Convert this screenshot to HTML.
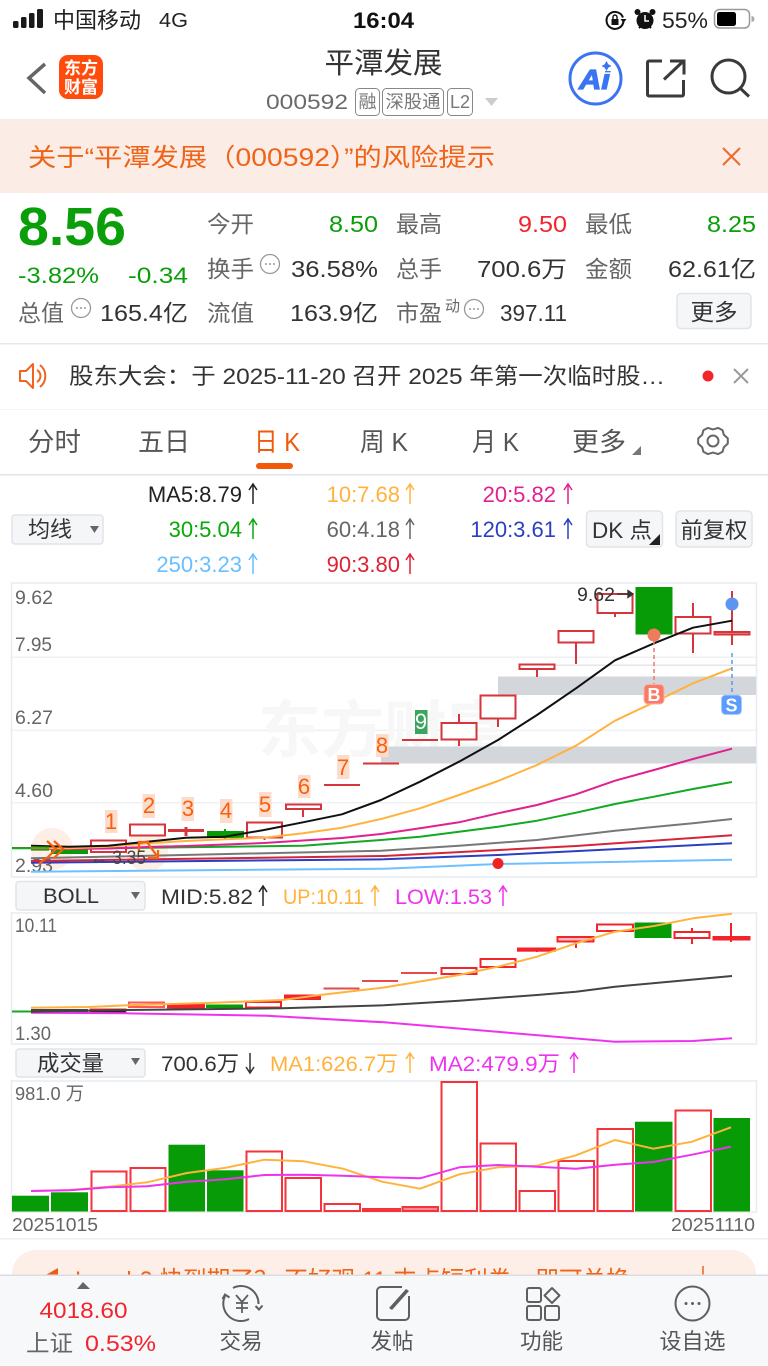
<!DOCTYPE html>
<html lang="zh"><head><meta charset="utf-8"><title>平潭发展</title>
<style>
html,body{margin:0;padding:0;background:#fff;width:768px;height:1366px;overflow:hidden}
svg{display:block;position:absolute;left:0;top:0}
text{font-family:"Liberation Sans","Noto Sans CJK SC",sans-serif}
.lab{font-size:23px;fill:#666}
.val{font-size:23px;fill:#333;text-anchor:end}
.g{fill:#0a9f0a}.r{fill:#f2242c}
.ax{font-size:19px;fill:#666}
.tab{font-size:26px;fill:#555}
.ma{font-size:22px;text-anchor:end}
.btn{fill:#f5f6f8;stroke:#e1e4e9;stroke-width:1.5}
.c1 rect,.c1 path{stroke:#d6353b;stroke-width:2;fill:#fff}
.c2 rect,.c2 path{stroke:#f3232b;stroke-width:2;fill:#fff}
.v rect{stroke:#f5333b;stroke-width:2;fill:#fff}
.c1 rect.gr,.c2 rect.gr,.v rect.gr{fill:#079b07;stroke:none}
.num{font-size:22px;fill:#f8600f;text-anchor:middle}
.nb{fill:#fcdccb}
.ln{fill:none;stroke-width:2;stroke-linejoin:round;stroke-linecap:butt}
.ic{fill:none;stroke:#5f5f5f;stroke-width:2}
.nav{font-size:22px;fill:#555;text-anchor:middle}
</style></head><body>
<svg width="768" height="1366" viewBox="0 0 768 1366" xmlns="http://www.w3.org/2000/svg">
<rect width="768" height="1366" fill="#fff"/>
<!-- status bar -->
<g fill="#1a1a1a"><rect x="13" y="21" width="5.5" height="7" rx="1.5"/><rect x="21" y="17" width="5.5" height="11" rx="1.5"/><rect x="29" y="13" width="5.5" height="15" rx="1.5"/><rect x="37" y="9" width="6" height="19" rx="1.5"/></g>
<text x="53" y="28" font-size="22" fill="#222" textLength="88" lengthAdjust="spacingAndGlyphs">中国移动</text>
<text x="159" y="27" font-size="20" fill="#222" textLength="29" lengthAdjust="spacingAndGlyphs">4G</text>
<text x="383.5" y="28" font-size="22" font-weight="700" fill="#111" text-anchor="middle" textLength="61" lengthAdjust="spacingAndGlyphs">16:04</text>
<path d="M623 17.500A8.500 8.500 0 1 0 623.500 21" fill="none" stroke="#111" stroke-width="2"/><path d="M620.500 19h6l-3 4z" fill="#111"/><rect x="611.500" y="19" width="7" height="6" fill="#111"/><path d="M613 19v-2a2 2 0 0 1 4 0v2" fill="none" stroke="#111" stroke-width="1.400"/>
<circle cx="645" cy="20.500" r="8.500" fill="#111"/><circle cx="637.500" cy="12" r="3" fill="#111"/><circle cx="652.500" cy="12" r="3" fill="#111"/><path d="M645 15v6h4" stroke="#fff" stroke-width="1.500" fill="none"/><path d="M639 28l2-2M651 28l-2-2" stroke="#111" stroke-width="2"/>
<text x="662" y="28" font-size="22" fill="#222" textLength="46" lengthAdjust="spacingAndGlyphs">55%</text>
<rect x="714.500" y="9.500" width="35" height="18.500" rx="5" fill="none" stroke="#999" stroke-width="1.500"/><rect x="717" y="12" width="19" height="14" rx="2.500" fill="#000"/><path d="M751.500 16a3 3 0 0 1 0 6z" fill="#aaa"/>
<!-- nav -->
<path d="M45 64L29 78l16 15" fill="none" stroke="#666" stroke-width="3.500"/>
<rect x="59" y="55" width="44" height="44" rx="9" fill="#ff4c0c"/>
<text x="81" y="74" font-size="17" font-weight="700" fill="#fff" text-anchor="middle" textLength="34" lengthAdjust="spacingAndGlyphs">东方</text>
<text x="81" y="93" font-size="17" font-weight="700" fill="#fff" text-anchor="middle" textLength="34" lengthAdjust="spacingAndGlyphs">财富</text>
<text x="383.500" y="73" font-size="29" fill="#333" text-anchor="middle" textLength="118" lengthAdjust="spacingAndGlyphs">平潭发展</text>
<text x="266" y="109" font-size="21.500" fill="#6a6a6a" textLength="82" lengthAdjust="spacingAndGlyphs">000592</text>
<g fill="none" stroke="#888" stroke-width="1"><rect x="355.500" y="88.500" width="24" height="27" rx="4"/><rect x="382.500" y="88.500" width="61" height="27" rx="4"/><rect x="447.500" y="88.500" width="25" height="27" rx="4"/></g>
<text x="367.500" y="108" font-size="18" fill="#777" text-anchor="middle">融</text>
<text x="413" y="108" font-size="18" fill="#777" text-anchor="middle" textLength="55" lengthAdjust="spacingAndGlyphs">深股通</text>
<text x="460" y="108" font-size="18" fill="#777" text-anchor="middle">L2</text>
<path d="M485 98h13l-6.500 8z" fill="#ccc"/>
<circle cx="595.500" cy="78.500" r="25.500" fill="#fff" stroke="#3b74f2" stroke-width="3"/>
<text x="579" y="89" font-size="28" font-weight="700" font-style="italic" fill="#3b74f2" stroke="#3b74f2" stroke-width="1.200" textLength="31" lengthAdjust="spacingAndGlyphs">Ai</text>
<rect x="601" y="63" width="10" height="8" fill="#fff"/>
<path d="M606.500 61l1.800 3.200 3.200 1.800-3.200 1.800-1.800 3.200-1.800-3.200-3.200-1.800 3.200-1.800z" fill="#3b74f2"/>
<path d="M662 61h-13a1.500 1.500 0 0 0-1.500 1.500v32a1.500 1.500 0 0 0 1.500 1.500h33a1.500 1.500 0 0 0 1.500-1.500v-14.500" fill="none" stroke="#3a3a3a" stroke-width="3"/>
<path d="M664 79.500l19.500-18.500M670 61h14v13.500" fill="none" stroke="#3a3a3a" stroke-width="3"/>
<circle cx="728.500" cy="76.500" r="16.500" fill="none" stroke="#3a3a3a" stroke-width="3"/><path d="M740 88l9 8.500" stroke="#3a3a3a" stroke-width="3"/>
<rect y="119" width="768" height="1" fill="#eee"/>
<!-- risk -->
<rect y="120" width="768" height="73" fill="#fbece6"/>
<text x="28" y="166" font-size="25" fill="#ef6418" textLength="467" lengthAdjust="spacingAndGlyphs">关于“平潭发展（000592）”的风险提示</text>
<path d="M723 148l17 17M740 148l-17 17" stroke="#f0692a" stroke-width="2" fill="none"/>
<!-- quote -->
<text x="18" y="245" font-size="54" font-weight="700" class="g" textLength="108" lengthAdjust="spacingAndGlyphs">8.56</text>
<text x="18" y="283" font-size="22.500" class="g" textLength="81" lengthAdjust="spacingAndGlyphs">-3.82%</text>
<text x="128" y="283" font-size="22.500" class="g" textLength="60" lengthAdjust="spacingAndGlyphs">-0.34</text>
<text x="18" y="321" class="lab" textLength="46" lengthAdjust="spacingAndGlyphs">总值</text>
<circle cx="81" cy="308" r="9.500" fill="none" stroke="#999" stroke-width="1.300"/><path d="M76 308h2M80 308h2M84 308h2" stroke="#999" stroke-width="1.400"/>
<text x="188" y="321" class="val" textLength="88" lengthAdjust="spacingAndGlyphs">165.4亿</text>
<text x="207" y="232" class="lab" textLength="47" lengthAdjust="spacingAndGlyphs">今开</text>
<text x="378" y="232" class="val g" textLength="49" lengthAdjust="spacingAndGlyphs">8.50</text>
<text x="396" y="232" class="lab" textLength="46" lengthAdjust="spacingAndGlyphs">最高</text>
<text x="567" y="232" class="val r" textLength="49" lengthAdjust="spacingAndGlyphs">9.50</text>
<text x="585" y="232" class="lab" textLength="47" lengthAdjust="spacingAndGlyphs">最低</text>
<text x="756" y="232" class="val g" textLength="49" lengthAdjust="spacingAndGlyphs">8.25</text>
<text x="207" y="277" class="lab" textLength="47" lengthAdjust="spacingAndGlyphs">换手</text>
<circle cx="270" cy="264" r="9.500" fill="none" stroke="#999" stroke-width="1.300"/><path d="M265 264h2M269 264h2M273 264h2" stroke="#999" stroke-width="1.400"/>
<text x="378" y="277" class="val" textLength="87" lengthAdjust="spacingAndGlyphs">36.58%</text>
<text x="396" y="277" class="lab" textLength="46" lengthAdjust="spacingAndGlyphs">总手</text>
<text x="567" y="277" class="val" textLength="90" lengthAdjust="spacingAndGlyphs">700.6万</text>
<text x="585" y="277" class="lab" textLength="47" lengthAdjust="spacingAndGlyphs">金额</text>
<text x="756" y="277" class="val" textLength="88" lengthAdjust="spacingAndGlyphs">62.61亿</text>
<text x="207" y="321" class="lab" textLength="47" lengthAdjust="spacingAndGlyphs">流值</text>
<text x="378" y="321" class="val" textLength="88" lengthAdjust="spacingAndGlyphs">163.9亿</text>
<text x="396" y="321" class="lab" textLength="46" lengthAdjust="spacingAndGlyphs">市盈</text>
<text x="445" y="311" font-size="15" fill="#666">动</text>
<circle cx="474" cy="309" r="9.500" fill="none" stroke="#999" stroke-width="1.300"/><path d="M469 309h2M473 309h2M477 309h2" stroke="#999" stroke-width="1.400"/>
<text x="567" y="321" class="val" textLength="67" lengthAdjust="spacingAndGlyphs">397.11</text>
<rect x="677" y="293.500" width="74" height="35" rx="4" class="btn"/>
<text x="714" y="320" font-size="23" fill="#333" text-anchor="middle" textLength="47" lengthAdjust="spacingAndGlyphs">更多</text>
<rect y="343" width="768" height="1.500" fill="#e8e8e8"/>
<!-- notice -->
<path d="M20 371h6l7-7v24l-7-7h-6z" fill="none" stroke="#f0641e" stroke-width="2" stroke-linejoin="round"/>
<path d="M37 370a7 7 0 0 1 0 12M40 365a14 14 0 0 1 0 22" fill="none" stroke="#f0641e" stroke-width="2"/>
<text x="69" y="384" font-size="22.500" fill="#333" textLength="596" lengthAdjust="spacingAndGlyphs">股东大会：于 2025-11-20 召开 2025 年第一次临时股…</text>
<circle cx="708" cy="376" r="5.500" fill="#f2242c"/>
<path d="M734 369l14 14M748 369l-14 14" stroke="#999" stroke-width="2"/>
<rect y="409" width="768" height="1" fill="#f3f3f3"/>
<!-- tabs -->
<text x="28" y="451" class="tab" textLength="53" lengthAdjust="spacingAndGlyphs">分时</text>
<text x="138" y="451" class="tab" textLength="52" lengthAdjust="spacingAndGlyphs">五日</text>
<text x="254" y="451" class="tab" style="fill:#f05a0a" textLength="46" lengthAdjust="spacingAndGlyphs">日 K</text>
<text x="360" y="451" class="tab" textLength="48" lengthAdjust="spacingAndGlyphs">周 K</text>
<text x="472" y="451" class="tab" textLength="47" lengthAdjust="spacingAndGlyphs">月 K</text>
<text x="572" y="451" class="tab" textLength="54" lengthAdjust="spacingAndGlyphs">更多</text>
<path d="M641 446v9h-9z" fill="#777"/>
<polygon points="727.800,438.400 727.800,443.600 723.800,447.200 722.600,451.700 718.100,454.100 713,452.600 707.900,454.100 703.400,451.700 702.200,447.200 698.200,443.600 698.200,438.400 702.200,434.800 703.400,430.300 707.900,427.900 713,429.400 718.100,427.900 722.600,430.300 723.800,434.800" fill="none" stroke="#666" stroke-width="2" stroke-linejoin="round"/><circle cx="713" cy="441" r="5.500" fill="none" stroke="#666" stroke-width="2"/>
<rect x="256" y="463" width="37" height="6" rx="3" fill="#f05a0a"/>
<rect y="474" width="768" height="1.500" fill="#dfe2e8"/>
<!-- MA legends -->
<text class="ma" x="242" y="502" fill="#222">MA5:8.79</text>
<text class="ma" x="400" y="502" fill="#ffb33e">10:7.68</text>
<text class="ma" x="556" y="502" fill="#e0218f">20:5.82</text>
<text class="ma" x="242" y="537" fill="#0aa80a">30:5.04</text>
<text class="ma" x="400" y="537" fill="#666">60:4.18</text>
<text class="ma" x="556" y="537" fill="#2b3fc0">120:3.61</text>
<text class="ma" x="242" y="572" fill="#69bfff">250:3.23</text>
<text class="ma" x="400" y="572" fill="#dd2233">90:3.80</text>
<g fill="none" stroke-width="1.500">
<path d="M253 504v-20m-4 6l4-6 4 6" stroke="#222"/>
<path d="M410 504v-20m-4 6l4-6 4 6" stroke="#ffb33e"/>
<path d="M568 504v-20m-4 6l4-6 4 6" stroke="#e0218f"/>
<path d="M253 539v-20m-4 6l4-6 4 6" stroke="#0aa80a"/>
<path d="M410 539v-20m-4 6l4-6 4 6" stroke="#666"/>
<path d="M568 539v-20m-4 6l4-6 4 6" stroke="#2b3fc0"/>
<path d="M253 574v-20m-4 6l4-6 4 6" stroke="#69bfff"/>
<path d="M410 574v-20m-4 6l4-6 4 6" stroke="#dd2233"/>
</g>
<rect x="12" y="515" width="91" height="29" rx="3" class="btn"/>
<text x="50" y="537" font-size="22" fill="#333" text-anchor="middle" textLength="44" lengthAdjust="spacingAndGlyphs">均线</text>
<path d="M90 526h9l-4.500 7z" fill="#666"/>
<rect x="586.500" y="511" width="76" height="36" rx="4" class="btn"/>
<text x="592" y="538" font-size="22" fill="#333" textLength="60" lengthAdjust="spacingAndGlyphs">DK 点</text>
<path d="M660 534v11h-11z" fill="#222"/>
<rect x="676" y="511" width="76" height="36" rx="4" class="btn"/>
<text x="714" y="538" font-size="22" fill="#333" text-anchor="middle" textLength="67" lengthAdjust="spacingAndGlyphs">前复权</text>
<!-- chart 1 -->
<rect x="11.500" y="583" width="745" height="294" fill="#fff" stroke="#e8ebf0" stroke-width="1.500"/>
<g fill="#eef0f4"><rect x="12" y="656.500" width="744" height="1.500"/><rect x="12" y="729.500" width="744" height="1.500"/><rect x="12" y="802" width="744" height="1.500"/><rect x="555" y="664.500" width="201" height="1.500" fill="#e4e6ea"/></g>
<text x="258" y="752" font-size="62" font-weight="700" fill="#f7f7f7" textLength="252" lengthAdjust="spacingAndGlyphs">东方财富</text>
<rect x="498" y="676.500" width="258" height="18.500" fill="#d3d6da"/>
<rect x="381" y="746.500" width="375" height="17" fill="#d3d6da"/>
<circle cx="52" cy="849" r="21" fill="#fdeee6"/><circle cx="147" cy="851" r="21" fill="#fdeee6"/>
<text x="15" y="604" class="ax" textLength="38" lengthAdjust="spacingAndGlyphs">9.62</text><text x="15" y="651" class="ax" textLength="37" lengthAdjust="spacingAndGlyphs">7.95</text><text x="15" y="724" class="ax" textLength="38" lengthAdjust="spacingAndGlyphs">6.27</text><text x="15" y="797" class="ax" textLength="38" lengthAdjust="spacingAndGlyphs">4.60</text><text x="15" y="872" class="ax" textLength="38" lengthAdjust="spacingAndGlyphs">2.93</text>
<g class="c1">
<path d="M12 848h36"/>
<rect class="gr" x="51" y="849" width="37" height="5"/>
<rect x="91" y="840.500" width="35" height="11.500"/>
<rect x="130" y="824.500" width="35" height="11"/>
<path d="M168 830.500h36M186 827v9" style="stroke-width:3"/>
<path d="M225 829v11" style="stroke:#079b07"/><rect class="gr" x="207" y="831" width="37" height="7"/>
<rect x="247" y="822.500" width="35" height="15"/><path d="M264.500 838v2"/>
<path d="M303 809v8"/><rect x="286" y="804.500" width="35" height="4.500"/>
<path d="M324 785h36M363 763.500h36M402 740h36"/>
<path d="M459 714v32"/><rect x="441.500" y="723" width="35" height="16.500"/>
<path d="M498 718v9"/><rect x="480.500" y="695.500" width="35" height="23"/>
<path d="M537 669v8"/><rect x="519.500" y="664.500" width="35" height="4.500"/>
<path d="M576 642v22"/><rect x="558.500" y="631" width="35" height="11.500"/>
<path d="M615 613v4"/><rect x="597.500" y="594" width="35" height="19"/>
<rect class="gr" x="635.500" y="587" width="37" height="47.500"/>
<path d="M693 603v50"/><rect x="675.500" y="617" width="35" height="16.500"/>
<path d="M732 591v54"/><rect x="714.500" y="632" width="35" height="2.500" style="fill:#f4a7a7"/>
</g>
<polyline class="ln" stroke="#6fc0ff" points="31,871.700 384,868.700 498,864 732,859.700"/>
<polyline class="ln" stroke="#2b3fc0" points="31,862.700 384,859.300 498,855 732,843.300"/>
<polyline class="ln" stroke="#d6253a" points="31,861 384,856 576,846 732,835.300"/>
<polyline class="ln" stroke="#777" points="31,858.300 381,850.700 459,845.700 537,840 615,830.700 693,823.300 732,819"/>
<polyline class="ln" stroke="#11aa22" points="12,848.300 31,848.300 108,848.300 225,846.700 303,845.700 381,840 420,836.700 459,831.700 498,826.700 537,820.700 576,812.700 615,804 654,796.700 693,789 732,782"/>
<polyline class="ln" stroke="#e0218f" points="31,849 69,849 108,848.500 147,847 186,846 225,844.500 264,843 303,840.500 342,838 381,834 420,828.300 459,822.300 498,813.300 537,805 576,794.300 615,780.700 654,770 693,759 732,748.700"/>
<polyline class="ln" stroke="#ffb33e" points="31,848.300 69,848.300 108,846.700 147,843.300 186,841 225,839.300 264,837.700 303,833.300 342,827.700 381,819 420,808.300 459,795 498,781 537,765 576,745.700 615,720.700 654,702.300 693,683.300 732,668.300"/>
<polyline class="ln" stroke="#111" points="31,845.700 69,846.700 108,845.700 147,841.700 186,837.700 225,836.700 264,830 303,822.300 342,814.300 381,800 420,781.700 459,761.700 498,740 537,715 576,688.300 615,660.300 654,643.300 693,627.700 732,620.700"/>
<rect x="31" y="846" width="18" height="5" fill="#079b07" opacity=".6"/>
<path d="M47 841l9 8-9 9M54 841l9 8-9 9M46 858l-7 6" fill="none" stroke="#f8600f" stroke-width="2.200"/>
<path d="M139 852v-10h10M147 842l10 14M148 858h10v-8" fill="none" stroke="#f8600f" stroke-width="2.200"/>
<text x="90" y="864" font-size="19" fill="#444" textLength="56" lengthAdjust="spacingAndGlyphs">← 3.35</text>
<g class="nb"><rect x="105" y="810" width="12.500" height="23"/><rect x="142.500" y="794" width="12.500" height="24"/><rect x="181.500" y="797" width="12.500" height="24"/><rect x="220" y="799" width="12.500" height="24"/><rect x="259" y="792" width="12.500" height="25"/><rect x="298" y="775" width="12.500" height="23"/><rect x="337" y="755" width="12.500" height="24"/><rect x="376" y="734" width="12.500" height="23"/></g>
<text class="num" x="111" y="829">1</text><text class="num" x="149" y="813">2</text><text class="num" x="188" y="816">3</text><text class="num" x="226" y="818">4</text><text class="num" x="265" y="812">5</text><text class="num" x="304" y="794">6</text><text class="num" x="343" y="775">7</text><text class="num" x="382" y="753">8</text>
<rect x="415" y="710" width="12.500" height="24" fill="#3aa55c"/><text x="421" y="729" font-size="22" fill="#fff" text-anchor="middle">9</text>
<text x="577" y="601" font-size="19" fill="#333" textLength="38" lengthAdjust="spacingAndGlyphs">9.62</text>
<path d="M617 594h15M628 590.500l5 3.500-5 3.500z" stroke="#333" stroke-width="1.300" fill="#333"/>
<circle cx="732" cy="604" r="6.500" fill="#5c96f0"/>
<circle cx="654" cy="635" r="6.500" fill="#f07a5c"/>
<path d="M654 641v44" stroke="#f4776a" stroke-width="1.500" stroke-dasharray="4 3"/>
<path d="M732 653v42" stroke="#5c96f0" stroke-width="1.500" stroke-dasharray="4 3"/>
<rect x="644" y="684.500" width="20" height="19.500" rx="4" fill="#fa7a68" stroke="#fbb2a6"/>
<text x="654" y="701" font-size="18" font-weight="700" fill="#fff" text-anchor="middle">B</text>
<rect x="721.500" y="695" width="20" height="19.500" rx="4" fill="#5c9cff" stroke="#a8c9fb"/>
<text x="731.500" y="711.500" font-size="18" font-weight="700" fill="#fff" text-anchor="middle">S</text>
<circle cx="498" cy="863.500" r="5.500" fill="#ee2222"/>
<!-- BOLL -->
<rect x="16" y="881.500" width="129" height="28.500" rx="3" class="btn"/>
<text x="43" y="903" font-size="21.500" fill="#333" textLength="56" lengthAdjust="spacingAndGlyphs">BOLL</text>
<path d="M131 892h9l-4.500 7z" fill="#666"/>
<text x="161" y="904" font-size="21.500" fill="#333" textLength="92" lengthAdjust="spacingAndGlyphs">MID:5.82</text>
<text x="283" y="904" font-size="21.500" fill="#ffb33e" textLength="81" lengthAdjust="spacingAndGlyphs">UP:10.11</text>
<text x="395" y="904" font-size="21.500" fill="#ee33ee" textLength="97" lengthAdjust="spacingAndGlyphs">LOW:1.53</text>
<g fill="none" stroke-width="1.500"><path d="M263 906v-20m-4 6l4-6 4 6" stroke="#222"/><path d="M375 906v-20m-4 6l4-6 4 6" stroke="#ffb33e"/><path d="M503 906v-20m-4 6l4-6 4 6" stroke="#ee33ee"/></g>
<rect x="11.500" y="913" width="745" height="131" fill="#fff" stroke="#e8ebf0" stroke-width="1.500"/>
<text x="15" y="932" class="ax" textLength="42" lengthAdjust="spacingAndGlyphs">10.11</text><text x="15" y="1040" class="ax" textLength="36" lengthAdjust="spacingAndGlyphs">1.30</text>
<g class="c2">
<path d="M12 1011.500h19" style="stroke:#11aa22"/>
<rect x="31" y="1009" width="57" height="4" style="fill:#444;stroke:none"/>
<rect x="90" y="1009" width="36" height="4" style="fill:#222;stroke:#f3232b;stroke-width:1"/>
<rect x="129" y="1002.500" width="35" height="4.500" style="stroke:#f55;"/>
<rect x="168" y="1004.500" width="36" height="3" style="fill:#f3232b"/>
<rect class="gr" x="206" y="1004.500" width="37" height="3.500"/>
<rect x="246" y="1002" width="35" height="5.500"/>
<rect x="285" y="995.500" width="35" height="3.500" style="fill:#f3232b"/>
<path d="M323.500 988.500h36M362 981h36M401 973h36" style="stroke:#e64a4a"/>
<rect x="441.500" y="968" width="35" height="6"/>
<rect x="480.500" y="959" width="35" height="8"/>
<path d="M537 950v2"/><rect x="518" y="948.500" width="37" height="2.200" style="fill:#f3232b"/>
<path d="M576 941v7"/><rect x="557.500" y="937" width="36" height="4.500" style="fill:#fbb"/>
<rect x="597" y="924.500" width="36" height="6.500"/>
<rect class="gr" x="634.500" y="922.500" width="37" height="15.500"/>
<path d="M692 928v16"/><rect x="674.500" y="932" width="35" height="6"/>
<path d="M731 923v19"/><rect x="713.500" y="937" width="36" height="2.500" style="fill:#f3232b"/>
</g>
<polyline class="ln" stroke="#ee33ee" points="31,1012.700 126,1013.300 267,1015.700 384,1022.300 615,1041.700 693,1041 732,1038.300"/>
<polyline class="ln" stroke="#444" points="31,1011.700 126,1010 282,1008.300 384,1005.300 459,1000.700 537,995 576,991.700 615,986.700 732,976"/>
<polyline class="ln" stroke="#ffb33e" points="31,1007.700 89,1007 128,1005.300 207,1003 282,1000 320,995 384,987.500 459,975 498,966.700 537,956.700 576,943.300 615,931.700 654,926 693,918.300 732,913.700"/>
<!-- volume -->
<rect x="16" y="1049" width="129" height="28" rx="3" class="btn"/>
<text x="37" y="1071" font-size="22" fill="#333" textLength="67" lengthAdjust="spacingAndGlyphs">成交量</text>
<path d="M131 1058h9l-4.500 7z" fill="#666"/>
<text x="161" y="1071" font-size="21.500" fill="#333" textLength="78" lengthAdjust="spacingAndGlyphs">700.6万</text>
<text x="270" y="1071" font-size="21.500" fill="#ffb33e" textLength="128" lengthAdjust="spacingAndGlyphs">MA1:626.7万</text>
<text x="429" y="1071" font-size="21.500" fill="#ee33ee" textLength="131" lengthAdjust="spacingAndGlyphs">MA2:479.9万</text>
<g fill="none" stroke-width="1.500"><path d="M250 1053v20m-4-6l4 6 4-6" stroke="#333"/><path d="M410 1073v-20m-4 6l4-6 4 6" stroke="#ffb33e"/><path d="M574 1073v-20m-4 6l4-6 4 6" stroke="#ee33ee"/></g>
<rect x="11.500" y="1081" width="745" height="131" fill="#fff" stroke="#e8ebf0" stroke-width="1.500"/>
<text x="15" y="1100" font-size="18.500" fill="#666" textLength="69" lengthAdjust="spacingAndGlyphs">981.0 万</text>
<g class="v">
<rect class="gr" x="12" y="1195.700" width="37" height="15.800"/>
<rect class="gr" x="51" y="1192.300" width="37" height="19.200"/>
<rect x="91.500" y="1171.500" width="35" height="39.500"/>
<rect x="130.500" y="1168" width="35" height="43"/>
<rect class="gr" x="168.500" y="1144.700" width="36.500" height="66.800"/>
<rect class="gr" x="207" y="1170.300" width="36.500" height="41.200"/>
<rect x="246.500" y="1151.500" width="35.500" height="59.500"/>
<rect x="285.500" y="1178" width="35.500" height="33"/>
<rect x="324.500" y="1204" width="35.500" height="7"/>
<rect x="363" y="1209" width="37" height="2" style="fill:#f5333b"/>
<rect x="402.500" y="1207" width="35.500" height="4" style="fill:#fa8a8f"/>
<rect x="441.500" y="1082" width="35.500" height="129"/>
<rect x="480.500" y="1143.500" width="35.500" height="67.500"/>
<rect x="519.500" y="1191" width="35.500" height="20"/>
<rect x="558.500" y="1161" width="35.500" height="50"/>
<rect x="597.500" y="1129" width="35.500" height="82"/>
<rect class="gr" x="635" y="1121.700" width="37.500" height="89.800"/>
<rect x="675.500" y="1110.500" width="35.500" height="100.500"/>
<rect class="gr" x="713.500" y="1118" width="36.500" height="93.500"/>
</g>
<polyline class="ln" stroke="#ffb33e" points="31,1191 70,1190 109,1186.700 147,1182.300 187,1173 226,1167.700 264.500,1159.700 303.700,1161.300 343,1168.700 382,1181.700 420,1188.700 459.400,1174.300 498,1167.300 537,1165.700 576,1155.300 615,1140 653.400,1148.700 692,1141.700 731,1127.300"/>
<polyline class="ln" stroke="#ee33ee" points="31,1191 70,1190.300 109,1187.300 147,1186.300 187,1181.700 226,1179.300 264.500,1175 303.700,1174.700 343,1175.700 382,1177.300 420,1178.300 459.400,1167.300 498,1165 537,1166.700 576,1168.700 615,1164.700 653.400,1162 692,1154.700 731,1146.700"/>
<text x="12" y="1231" font-size="18.500" fill="#666" textLength="86" lengthAdjust="spacingAndGlyphs">20251015</text>
<text x="755" y="1231" font-size="18.500" fill="#666" text-anchor="end" textLength="84" lengthAdjust="spacingAndGlyphs">20251110</text>
<rect y="1238" width="768" height="1.500" fill="#eceef1"/>
<!-- promo banner -->
<rect x="12" y="1250" width="744" height="60" rx="24" fill="#fdeee7"/>
<path d="M44 1276l14-8v8z" fill="#ef5a14"/>
<text x="75" y="1289" font-size="25" fill="#ef6418" textLength="555" lengthAdjust="spacingAndGlyphs">Level-2 快到期了？ 不好观 11 支点短利券，即可兑换</text>
<path d="M703 1266v14" stroke="#ef6418" stroke-width="1.500"/>
<!-- bottom bar -->
<rect y="1275" width="768" height="91" fill="#f7f8fa"/>
<rect y="1274.500" width="768" height="1.500" fill="#dcdde0"/>
<path d="M77 1289l6-7 7 7z" fill="#666"/>
<text x="83.500" y="1318" font-size="22" class="r" text-anchor="middle" textLength="88" lengthAdjust="spacingAndGlyphs">4018.60</text>
<text x="26" y="1351" font-size="23" fill="#666" textLength="47" lengthAdjust="spacingAndGlyphs">上证</text>
<text x="85" y="1351" font-size="22.500" class="r" textLength="71" lengthAdjust="spacingAndGlyphs">0.53%</text>
<path d="M233 1288A17.500 17.500 0 0 1 258.500 1304M249 1319A17.500 17.500 0 0 1 225 1296" class="ic"/>
<path d="M222.500 1299l2.500-4.500 4.500 3M255.500 1306l3.500 3.500 3.500-4" class="ic"/>
<path d="M236 1295l6 7 6-7M242 1302v11M236 1303h12M236 1308h12" class="ic" style="stroke-width:1.800"/>
<text x="241" y="1349" class="nav" textLength="43" lengthAdjust="spacingAndGlyphs">交易</text>
<path d="M402 1287h-21a4 4 0 0 0-4 4v25a4 4 0 0 0 4 4h24a4 4 0 0 0 4-4v-20" class="ic"/>
<path d="M389 1308l17-19 3 2-17 19z" fill="#5f5f5f"/>
<text x="392" y="1349" class="nav" textLength="43" lengthAdjust="spacingAndGlyphs">发帖</text>
<g class="ic"><rect x="527" y="1288" width="14" height="14" rx="2"/><rect x="527" y="1306" width="14" height="14" rx="2"/><rect x="545" y="1306" width="14" height="14" rx="2"/><path d="M552 1288l7.500 7.500-7.500 7.500-7.500-7.500z" stroke-linejoin="round"/></g>
<text x="541.500" y="1349" class="nav" textLength="43" lengthAdjust="spacingAndGlyphs">功能</text>
<circle cx="692.500" cy="1303.500" r="17" class="ic"/>
<circle cx="686" cy="1303.500" r="1.500" fill="#5f5f5f"/><circle cx="692.500" cy="1303.500" r="1.500" fill="#5f5f5f"/><circle cx="699" cy="1303.500" r="1.500" fill="#5f5f5f"/>
<text x="692.500" y="1349" class="nav" textLength="66" lengthAdjust="spacingAndGlyphs">设自选</text>
</svg>
</body></html>
